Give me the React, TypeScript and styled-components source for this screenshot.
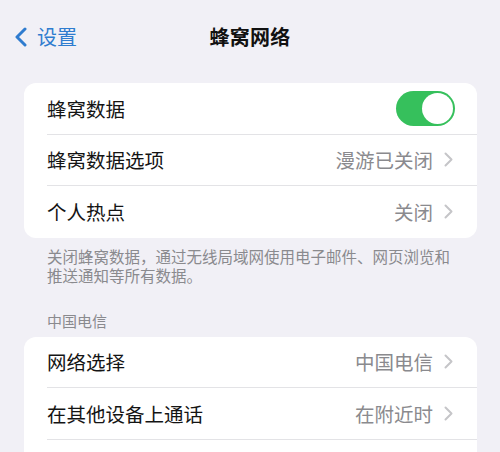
import React from 'react';
import styled, { createGlobalStyle } from 'styled-components';

const GlobalStyle = createGlobalStyle`
  html, body {
    margin: 0;
    padding: 0;
    background: #f1f0f6;
  }
  body {
    font-family: "Noto Sans CJK SC", "Noto Sans", sans-serif;
    -webkit-font-smoothing: antialiased;
  }
`;

const Page = styled.div`
  width: 500px;
  height: 452px;
  overflow: hidden;
  background: #f1f0f6;
`;

const NavBar = styled.div`
  position: relative;
  height: 73px;
  display: flex;
  align-items: center;
  justify-content: center;
`;

const BackButton = styled.div`
  position: absolute;
  left: 15px;
  top: 0;
  height: 73px;
  display: flex;
  align-items: center;
  gap: 10px;
  color: #2f7ccf;
  font-size: 20px;
`;

const Title = styled.div`
  font-size: 20px;
  font-weight: 700;
  color: #111;
  letter-spacing: 0.2px;
`;

const Card = styled.div<{ $top?: number }>`
  margin: ${p => p.$top ?? 0}px 23px 0 24px;
  background: #fff;
  border-radius: 12px;
  overflow: hidden;
`;

const Row = styled.div<{ $last?: boolean }>`
  height: 51.5px;
  margin-left: 23px;
  padding-right: 24px;
  display: flex;
  align-items: center;
  justify-content: space-between;
  box-sizing: border-box;
  border-bottom: ${p => (p.$last ? 'none' : '1px solid #e3e3e6')};
`;

const Label = styled.span`
  font-size: 19.5px;
  color: #141414;
`;

const Value = styled.span`
  display: flex;
  align-items: center;
  gap: 11px;
  font-size: 19.5px;
  color: #8a8a8e;
`;

const Toggle = styled.div<{ $on: boolean }>`
  width: 59px;
  height: 35px;
  margin-right: -2px;
  border-radius: 18px;
  background: ${p => (p.$on ? '#36c05c' : '#e5e5ea')};
  position: relative;
  &::after {
    content: '';
    position: absolute;
    top: 2px;
    ${p => (p.$on ? 'right: 2px;' : 'left: 2px;')}
    width: 31px;
    height: 31px;
    border-radius: 50%;
    background: #fff;
  }
`;

const Footnote = styled.div`
  width: 414px;
  padding: 9px 0 0 47px;
  font-size: 15.5px;
  line-height: 19.5px;
  color: #8a8a8e;
`;

const SectionHeader = styled.div`
  padding: 25px 0 0 47px;
  font-size: 15px;
  line-height: 20px;
  color: #8a8a8e;
`;

const Chevron = () => (
  <svg width="9" height="15" viewBox="0 0 9 15">
    <path d="M1.5 1.5 L7.5 7.5 L1.5 13.5" fill="none" stroke="#c5c5c8" strokeWidth="2" strokeLinecap="round" strokeLinejoin="round" />
  </svg>
);

const BackChevron = () => (
  <svg width="12" height="20" viewBox="0 0 12 20">
    <path d="M10 2 L2 10 L10 18" fill="none" stroke="#2f7ccf" strokeWidth="3" strokeLinecap="round" strokeLinejoin="round" />
  </svg>
);

export default function App() {
  return (
    <Page>
      <GlobalStyle />
      <NavBar>
        <BackButton>
          <BackChevron />
          <span>设置</span>
        </BackButton>
        <Title>蜂窝网络</Title>
      </NavBar>

      <Card $top={10}>
        <Row>
          <Label>蜂窝数据</Label>
          <Toggle $on />
        </Row>
        <Row>
          <Label>蜂窝数据选项</Label>
          <Value>漫游已关闭<Chevron /></Value>
        </Row>
        <Row $last>
          <Label>个人热点</Label>
          <Value>关闭<Chevron /></Value>
        </Row>
      </Card>

      <Footnote>关闭蜂窝数据，通过无线局域网使用电子邮件、网页浏览和推送通知等所有数据。</Footnote>

      <SectionHeader>中国电信</SectionHeader>

      <Card $top={6}>
        <Row>
          <Label>网络选择</Label>
          <Value>中国电信<Chevron /></Value>
        </Row>
        <Row>
          <Label>在其他设备上通话</Label>
          <Value>在附近时<Chevron /></Value>
        </Row>
        <Row $last />
      </Card>
    </Page>
  );
}
